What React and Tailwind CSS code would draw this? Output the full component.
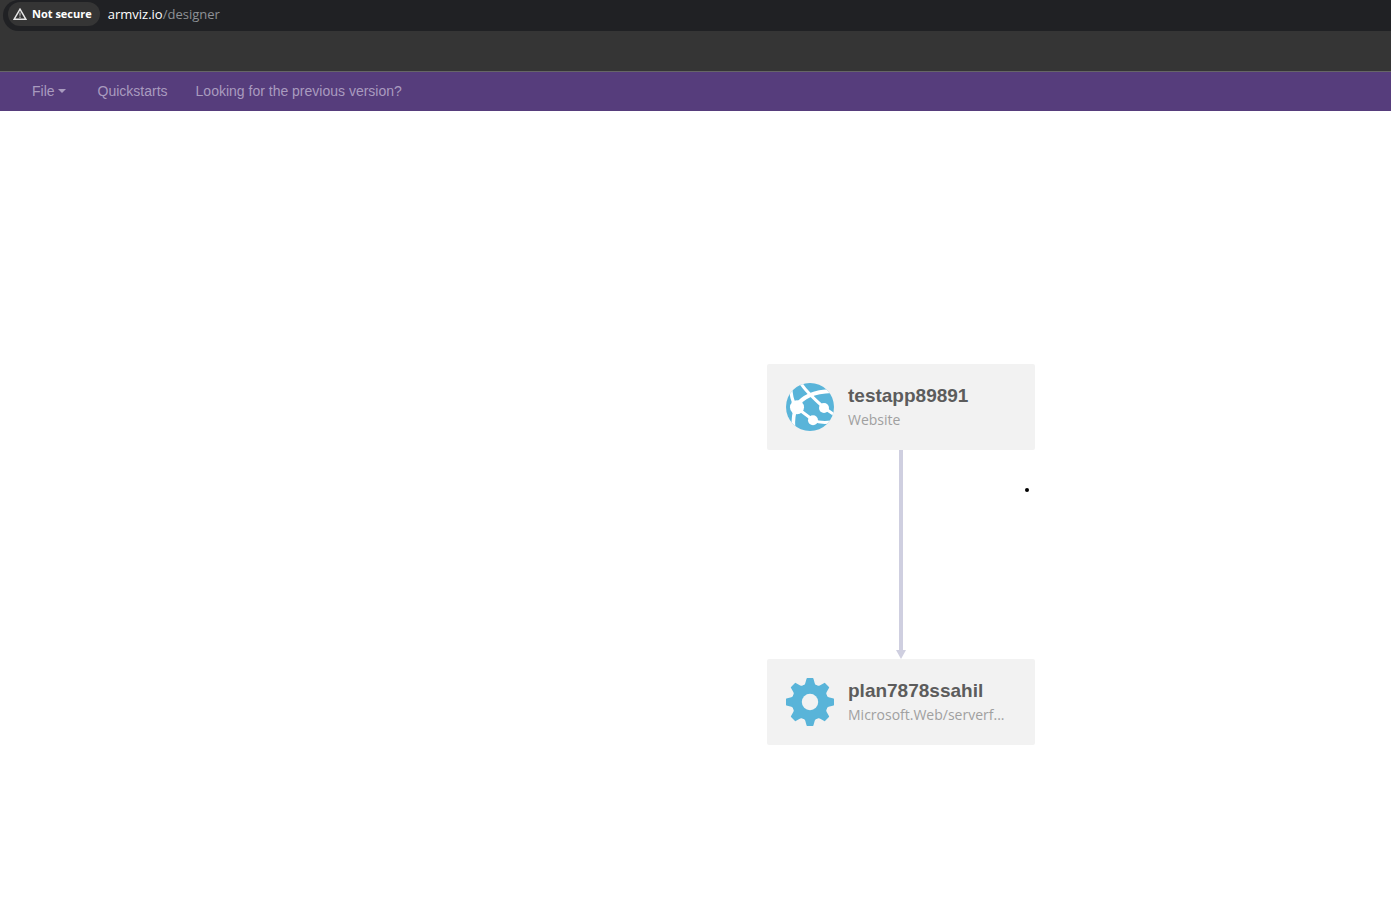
function WarningIcon() {
  return (
    <svg viewBox="0 0 14 12" className="h-3 w-3.5 shrink-0" fill="none" aria-hidden="true">
      <path d="M7 1.2 L12.8 11.2 H1.2 Z" stroke="#e8e8e8" strokeWidth="1.5" />
      <path d="M7 4.6 V7.8 M7 8.6 V9.9" stroke="#b4b4b4" strokeWidth="1.3" />
    </svg>
  );
}

function WebsiteIcon() {
  return (
    <svg viewBox="0 0 48 48" className="size-12 shrink-0" aria-hidden="true">
      <defs>
        <clipPath id="globe">
          <circle cx="24" cy="24" r="24" />
        </clipPath>
      </defs>
      <g clipPath="url(#globe)">
        <rect width="48" height="48" fill="#59b4d9" />
        <g fill="none" stroke="#fff">
          <path d="M14 -1 C18 6 26 14 38 24.7 L48 31.5" strokeWidth="3" />
          <path d="M9 24 C17 14 27 8.5 46 8" strokeWidth="4.2" />
          <path d="M5 5 C4.5 12 6.5 18 10 25" strokeWidth="3.2" />
          <path d="M10 25 C7.5 31 7 37 7.5 44" strokeWidth="3.6" />
          <path d="M11 25 L27 37 C32 39.4 38 40 45 39" strokeWidth="3" />
        </g>
        <g fill="#fff">
          <circle cx="11" cy="24.2" r="7" />
          <circle cx="38" cy="25" r="5" />
          <circle cx="27" cy="37.2" r="5" />
        </g>
      </g>
    </svg>
  );
}

function GearIcon() {
  const angles = [0, 45, 90, 135, 180, 225, 270, 315];
  return (
    <svg viewBox="0 0 48 48" className="size-12 shrink-0" aria-hidden="true">
      <g fill="#59b4d9">
        {angles.map((angle) => (
          <path
            key={angle}
            d="M20.6 0.4 Q20.7 0 21.2 0 H26.8 Q27.3 0 27.4 0.4 L28.8 5.4 Q29.4 7.2 31.4 7.6 L24 24 L16.6 7.6 Q18.6 7.2 19.2 5.4 Z"
            transform={`rotate(${angle} 24 24)`}
          />
        ))}
        <circle cx="24" cy="24" r="17.8" />
      </g>
      <circle cx="24" cy="24" r="8.2" fill="#f2f2f2" />
    </svg>
  );
}

function ResourceNode({ icon, name, type, className }) {
  return (
    <article
      className={`absolute flex w-[268px] items-center gap-3.5 rounded-xs bg-[#f2f2f2] px-[19px] py-[18px] ${className}`}
    >
      {icon}
      <div className="min-w-0 pb-0.5">
        <h2 className="font-['Liberation_Sans',sans-serif] text-[19px] leading-7 font-bold text-[#5c5c5c]">
          {name}
        </h2>
        <p className="font-['Open_Sans',sans-serif] text-sm leading-5 whitespace-nowrap text-[#a0a0a0]">
          {type}
        </p>
      </div>
    </article>
  );
}

export default function App() {
  return (
    <div className="flex min-h-screen flex-col bg-white">
      <header className="bg-[#353535] pb-10 pl-[3px] font-['Open_Sans',sans-serif]">
        <div className="flex h-[31px] items-start gap-2 rounded-bl-2xl rounded-tl-2xl bg-[#202124] pt-0.5 pl-[5px]">
          <button
            type="button"
            className="flex h-6 items-center gap-[5px] rounded-full bg-[#353535] pr-2 pl-[5px] text-[11px] font-bold text-white"
          >
            <WarningIcon />
            Not secure
          </button>
          <a href="#designer" className="text-[13px] leading-6 text-[#8e9196]">
            <span className="text-white">armviz.io</span>/designer
          </a>
        </div>
      </header>

      <nav className="flex h-10 items-center gap-7 border-t border-[#666] bg-[#563d7c] pb-0.5 pl-8 font-['Liberation_Sans',sans-serif] text-sm text-[#a99bbf]">
        <button type="button" className="mr-1 flex items-center gap-[3px]">
          File
          <svg viewBox="0 0 8 4" className="h-1 w-2" aria-hidden="true">
            <path d="M0 0 H8 L4 4 Z" fill="currentColor" />
          </svg>
        </button>
        <a href="#quickstarts">Quickstarts</a>
        <a href="#previous">Looking for the previous version?</a>
      </nav>

      <main className="relative min-h-[660px] grow">
        <svg
          viewBox="0 0 12 210"
          className="absolute top-[338px] left-[895px] h-[210px] w-3"
          aria-hidden="true"
        >
          <path d="M4 0 H8 V201 H11 L6 210 L1 201 H4 Z" fill="#cfcfe0" />
        </svg>
        <ResourceNode
          icon={<WebsiteIcon />}
          name="testapp89891"
          type="Website"
          className="top-[253px] left-[767px]"
        />
        <ResourceNode
          icon={<GearIcon />}
          name="plan7878ssahil"
          type="Microsoft.Web/serverf..."
          className="top-[548px] left-[767px]"
        />
        <span className="absolute top-[377px] left-[1025px] size-1 rounded-full bg-black" />
      </main>
    </div>
  );
}
